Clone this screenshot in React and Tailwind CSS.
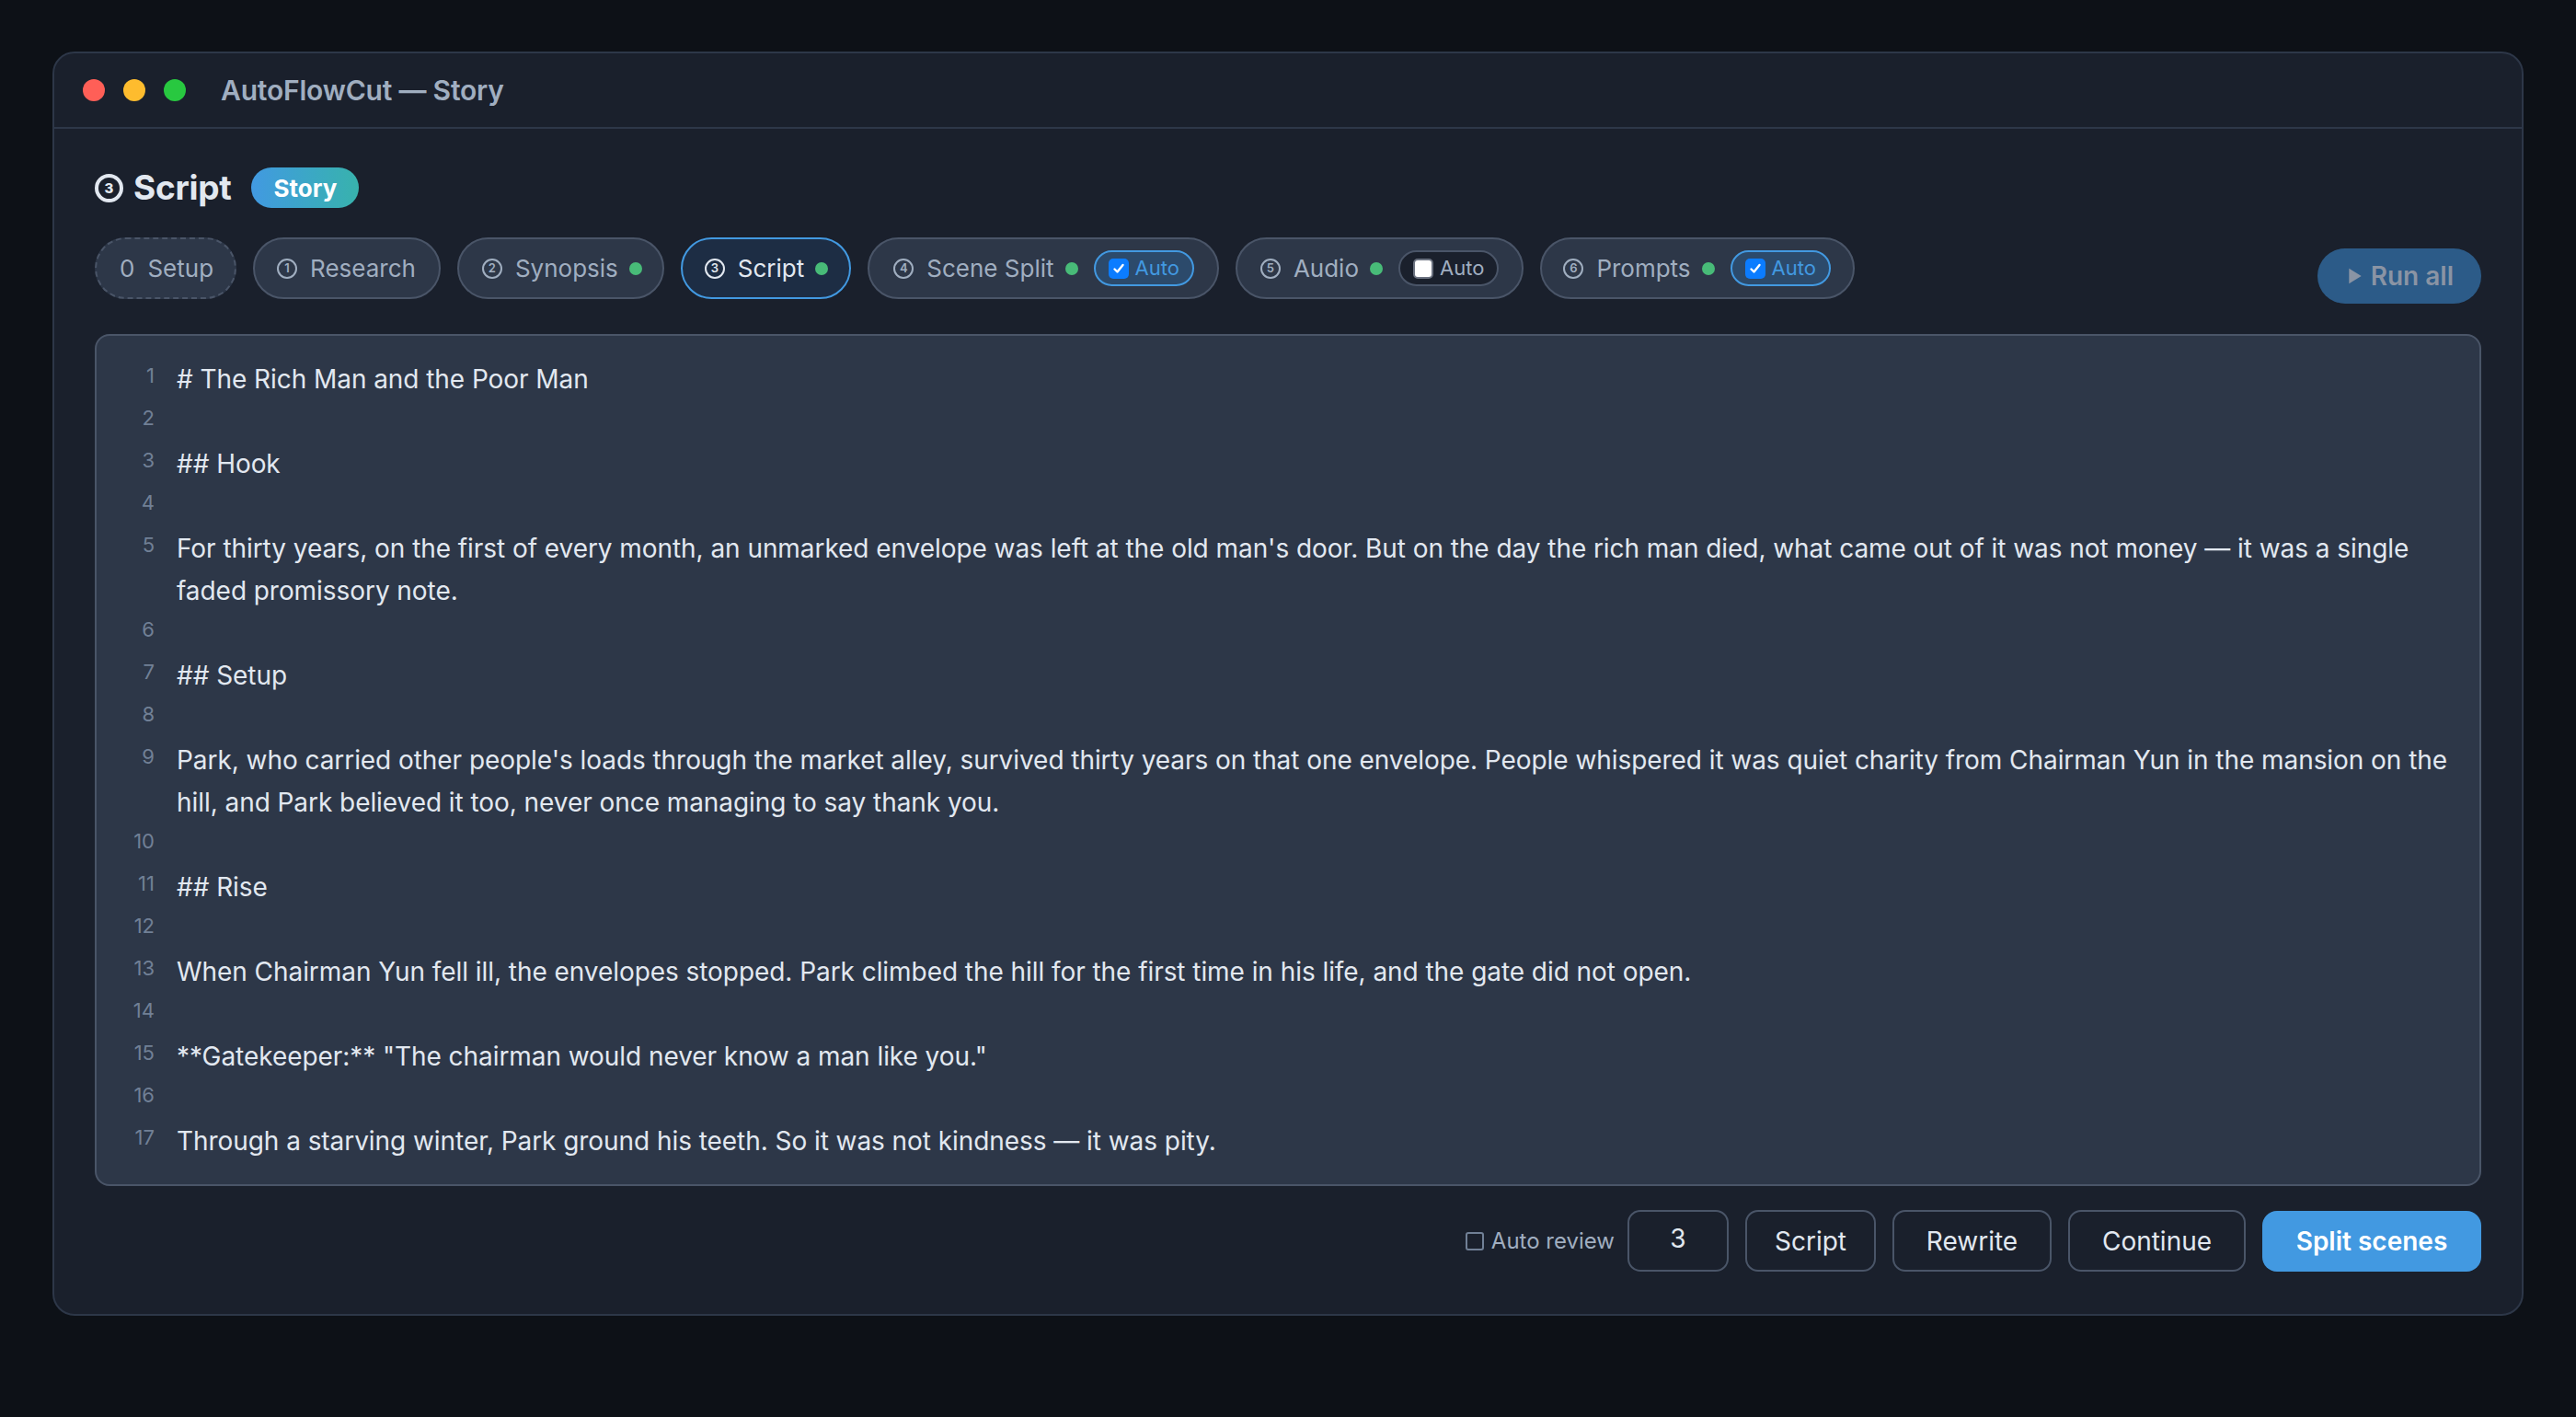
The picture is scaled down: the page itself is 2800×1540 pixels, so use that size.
import React from "react";

const lines = [
  ["# The Rich Man and the Poor Man"],
  [""],
  ["## Hook"],
  [""],
  [
    "For thirty years, on the first of every month, an unmarked envelope was left at the old man's door. But on the day the rich man died, what came out of it was not money — it was a single",
    "faded promissory note.",
  ],
  [""],
  ["## Setup"],
  [""],
  [
    "Park, who carried other people's loads through the market alley, survived thirty years on that one envelope. People whispered it was quiet charity from Chairman Yun in the mansion on the",
    "hill, and Park believed it too, never once managing to say thank you.",
  ],
  [""],
  ["## Rise"],
  [""],
  [
    "When Chairman Yun fell ill, the envelopes stopped. Park climbed the hill for the first time in his life, and the gate did not open.",
  ],
  [""],
  ['**Gatekeeper:** "The chairman would never know a man like you."'],
  [""],
  ["Through a starving winter, Park ground his teeth. So it was not kindness — it was pity."],
];

function Circled({ n, active }) {
  return (
    <span
      className={
        "flex h-[22px] w-[22px] shrink-0 items-center justify-center rounded-full border-2 text-[13px] font-semibold leading-none " +
        (active ? "border-[#e2e8f0] text-[#e2e8f0]" : "border-[#a0aec0] text-[#a0aec0]")
      }
    >
      {n}
    </span>
  );
}

function Dot() {
  return <span className="ml-[-2px] h-[14px] w-[14px] shrink-0 rounded-full bg-[#48bb78]" />;
}

function Check() {
  return (
    <svg viewBox="0 0 16 16" className="h-[16px] w-[16px]">
      <path d="M3.5 8.5 L6.5 11.5 L12.5 4" fill="none" stroke="white" strokeWidth="2.4" strokeLinecap="round" strokeLinejoin="round" />
    </svg>
  );
}

function AutoChip({ checked }) {
  return (
    <span
      className={
        "ml-[3px] flex h-[39px] items-center gap-[7px] rounded-full border-2 pl-[14px] pr-[14px] text-[22px] " +
        (checked
          ? "border-[#4299e1] bg-[#2c4a6b] text-[#4299e1]"
          : "border-[#4a5568] bg-[#1a202c] text-[#a0aec0]")
      }
    >
      {checked ? (
        <span className="flex h-[22px] w-[22px] items-center justify-center rounded-[5px] bg-[#0b7cff]">
          <Check />
        </span>
      ) : (
        <span className="h-[22px] w-[22px] rounded-[5px] border-2 border-[#6b7280] bg-white" />
      )}
      <span>Auto</span>
    </span>
  );
}

function Pill({ children, className = "" }) {
  return (
    <div
      className={
        "flex h-[67px] items-center gap-[14px] rounded-full border-2 text-[26px] " + className
      }
    >
      {children}
    </div>
  );
}

function OutlineBtn({ w, children }) {
  return (
    <button
      className={
        "flex h-[67px] items-center justify-center rounded-[14px] border-2 border-[#4a5568] text-[28px] text-[#e2e8f0] " + w
      }
    >
      {children}
    </button>
  );
}

export default function App() {
  const normal = "border-[#4a5568] bg-[#2d3748] text-[#a0aec0]";
  return (
    <div className="min-h-screen bg-[#0d1117] px-[57px] pt-[56px] font-['Inter','Noto_Sans',sans-serif]">
      <div className="rounded-[24px] border-2 border-[#2d3748] bg-[#1a202c]">
        {/* title bar */}
        <div className="flex h-[82px] items-center border-b-2 border-[#2d3748] pl-[31px]">
          <div className="flex gap-[20px]">
            <span className="h-[24px] w-[24px] rounded-full bg-[#ff5f57]" />
            <span className="h-[24px] w-[24px] rounded-full bg-[#febc2e]" />
            <span className="h-[24px] w-[24px] rounded-full bg-[#28c840]" />
          </div>
          <div className="ml-[38px] text-[30px] font-semibold tracking-[-0.2px] text-[#a0aec0]">
            AutoFlowCut — Story
          </div>
        </div>

        <div className="px-[44px] pb-[46px]">
          {/* heading */}
          <div className="mt-[41px] flex h-[46px] items-center">
            <span className="flex h-[31px] w-[31px] items-center justify-center rounded-full border-[4px] border-[#e2e8f0] text-[15px] font-extrabold leading-none text-[#e2e8f0]">
              3
            </span>
            <span className="ml-[11px] text-[37px] font-bold tracking-[-0.3px] text-[#e2e8f0]">Script</span>
            <span className="ml-[22px] flex h-[44px] items-center rounded-full bg-gradient-to-r from-[#4299e1] to-[#38b2ac] px-[24px] text-[26px] font-bold text-white">
              Story
            </span>
          </div>

          {/* pills row */}
          <div className="mt-[31px] flex items-start gap-[18px]">
            <Pill className="border-dashed border-[#4a5568] bg-[#2d3748] pl-[25px] pr-[23px] text-[#a0aec0]">
              <span>0</span>
              <span>Setup</span>
            </Pill>
            <Pill className={normal + " pl-[24px] pr-[25px]"}>
              <Circled n="1" />
              <span>Research</span>
            </Pill>
            <Pill className={normal + " pl-[25px] pr-[22px]"}>
              <Circled n="2" />
              <span>Synopsis</span>
              <Dot />
            </Pill>
            <Pill className="border-[#4299e1] bg-[#1d2d44] pl-[24px] pr-[23px] text-[#e2e8f0]">
              <Circled n="3" active />
              <span>Script</span>
              <Dot />
            </Pill>
            <Pill className={normal + " pl-[26px] pr-[25px]"}>
              <Circled n="4" />
              <span>Scene Split</span>
              <Dot />
              <AutoChip checked />
            </Pill>
            <Pill className={normal + " pl-[25px] pr-[25px]"}>
              <Circled n="5" />
              <span>Audio</span>
              <Dot />
              <AutoChip checked={false} />
            </Pill>
            <Pill className={normal + " pl-[23px] pr-[24px]"}>
              <Circled n="6" />
              <span>Prompts</span>
              <Dot />
              <AutoChip checked />
            </Pill>
            <button className="ml-auto mt-[12px] flex h-[60px] items-center gap-[8px] rounded-full bg-[#2c5b88] pl-[32px] pr-[30px] text-[28px] font-semibold text-[#8a94a4]">
              <svg viewBox="0 0 10 12" className="h-[20px] w-[18px]">
                <path d="M1 1 L9 6 L1 11 Z" fill="#8a94a4" />
              </svg>
              <span>Run all</span>
            </button>
          </div>

          {/* editor */}
          <div className="mt-[33px] rounded-[16px] border-2 border-[#4a5568] bg-[#2d3748] py-[24px] pl-[24px] pr-[24px]">
            {lines.map((l, i) => (
              <div key={i} className="flex">
                <div className="w-[39px] shrink-0 text-right text-[22px] leading-[38px] text-[#718096]">
                  {i + 1}
                </div>
                <div className="ml-[24px] min-w-0 flex-1 text-[28px] leading-[46px] tracking-[-0.06px] text-[#e2e8f0]">
                  {l.map((t, j) => (
                    <div key={j} className="h-[46px] whitespace-nowrap">
                      {t}
                    </div>
                  ))}
                </div>
              </div>
            ))}
          </div>

          {/* bottom row */}
          <div className="mt-[26px] flex items-center justify-end gap-[18px]">
            <label className="mr-[-4px] flex items-center gap-[8px] text-[24px] text-[#a0aec0]">
              <span className="h-[20px] w-[20px] rounded-[3px] border-2 border-[#718096]" />
              <span>Auto review</span>
            </label>
            <div className="flex h-[67px] w-[110px] items-center justify-center rounded-[14px] border-2 border-[#4a5568] pb-[6px] text-[28px] text-[#e2e8f0]">
              3
            </div>
            <OutlineBtn w="w-[142px]">Script</OutlineBtn>
            <OutlineBtn w="w-[173px]">Rewrite</OutlineBtn>
            <OutlineBtn w="w-[193px]">Continue</OutlineBtn>
            <button className="flex h-[66px] w-[238px] items-center justify-center rounded-[16px] bg-[#4299e1] text-[28px] font-semibold text-white">
              Split scenes
            </button>
          </div>
        </div>
      </div>
    </div>
  );
}
